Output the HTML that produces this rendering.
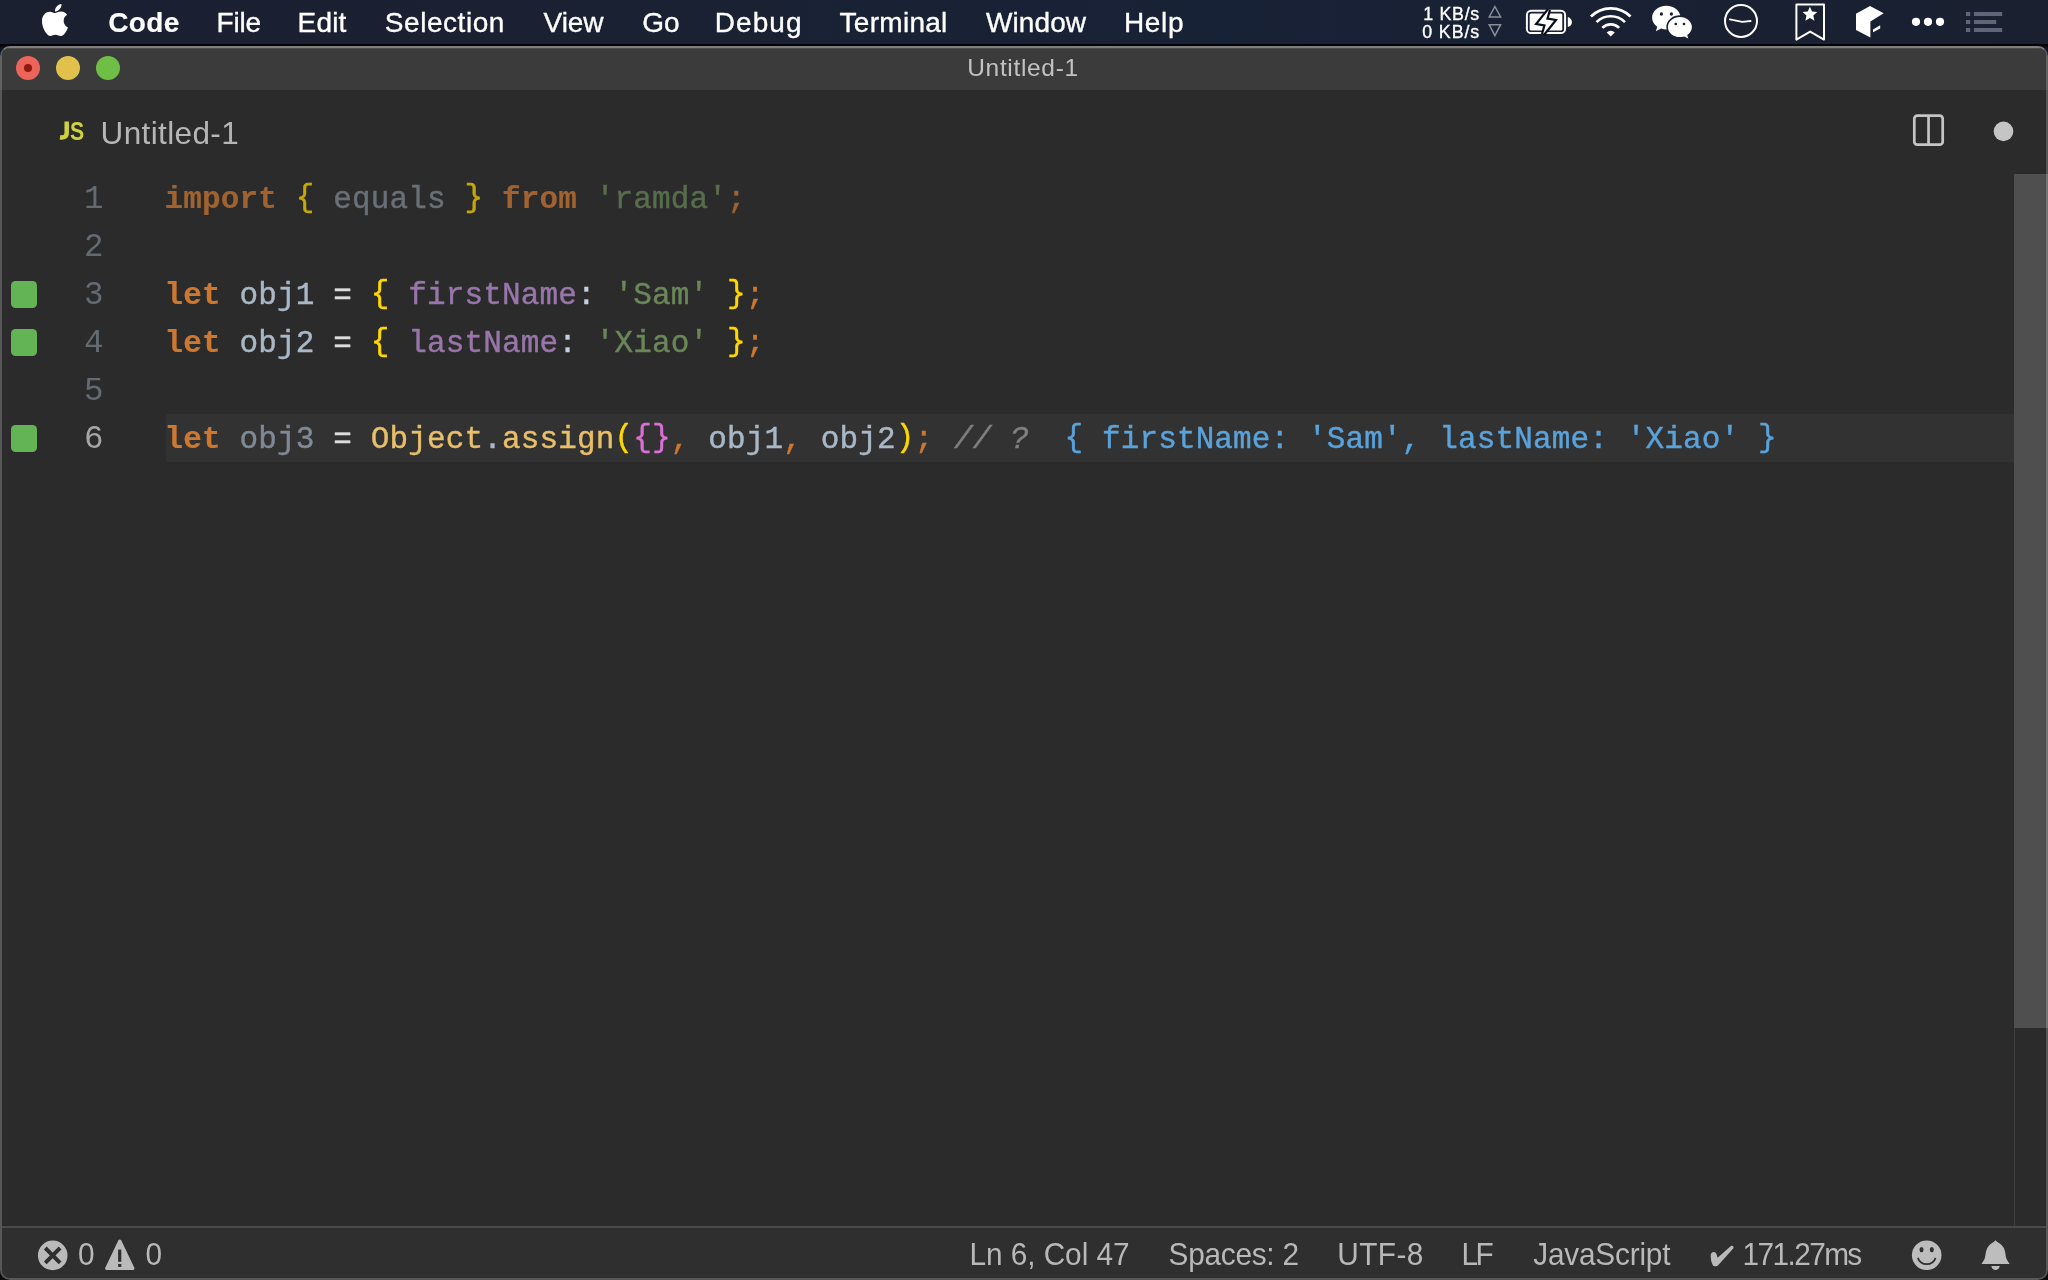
<!DOCTYPE html>
<html>
<head>
<meta charset="utf-8">
<title>Untitled-1</title>
<style>
*{margin:0;padding:0;box-sizing:border-box}
html,body{width:2048px;height:1280px;overflow:hidden;background:#0d0d0d}
body{position:relative;font-family:"Liberation Sans",sans-serif;color:#fff}
.abs{position:absolute}
/* ---------- macOS menu bar ---------- */
#menubar{will-change:transform;position:absolute;left:0;top:0;width:2048px;height:45px;background:linear-gradient(90deg,#1b2031 0,#1a2133 30%,#182236 60%,#192134 75%,#1a2030 100%)}
#menubar .mi{position:absolute;top:0;height:44px;line-height:45px;font-size:28px;color:#fff;white-space:nowrap;transform-origin:0 50%;-webkit-text-stroke:0.35px #fff}
#menubar .mi.b{font-weight:bold;-webkit-text-stroke:0.15px #fff}
#menuline{position:absolute;left:0;top:44px;width:2048px;height:16px;background:linear-gradient(#020305 0,#020305 2px,#0d1626 3px,#0d1626 100%)}
.bov{position:absolute;width:2px}
/* ---------- window ---------- */
#win{will-change:transform;position:absolute;left:0;top:46px;width:2048px;height:1234px;background:#2b2b2b;border-radius:10px;overflow:hidden;border:2px solid #575757;border-top-color:#7e7e7e}
#titlebar{position:absolute;left:0;top:0;width:2044px;height:42px;background:#3b3b3b;box-shadow:inset 0 1px 0 #4c4c4c}
#title{position:absolute;left:0;width:2042px;top:0;height:42px;line-height:40px;text-align:center;font-size:24.5px;letter-spacing:0.67px;color:#c2c2c2}
.tl{position:absolute;width:24px;height:24px;border-radius:50%;top:8px}
/* ---------- tab bar ---------- */
#tabs{position:absolute;left:0;top:42px;width:2044px;height:84px;background:#2b2b2b}
#tabname{position:absolute;left:98.5px;top:1px;height:84px;line-height:84px;font-size:31.5px;letter-spacing:0.38px;color:#b6b6b6;white-space:nowrap}
#jsicon{position:absolute;left:67.8px;top:24.2px;height:34px;line-height:34px;font-size:25.6px;font-weight:bold;color:#cfd13e;transform:scaleX(0.83);transform-origin:0 50%;white-space:nowrap}
/* ---------- editor ---------- */
#editor{position:absolute;left:0;top:126px;width:2044px;height:1052px;background:#2b2b2b}
.ln{position:absolute;left:0;width:2012px;height:48px;line-height:48px;font-family:"Liberation Mono",monospace;font-size:31px;white-space:pre}
.ln .num{position:absolute;left:49.3px;width:52.2px;top:1.8px;text-align:right;color:#636a71;font-size:32.5px;letter-spacing:0}
.ln .code{position:absolute;left:162.6px;top:2.2px;color:#a9b7c6;letter-spacing:0.14px;-webkit-text-stroke:0.42px}
.ln.cur .hl{position:absolute;left:164px;top:0;width:1848px;height:48px;background:#323232}
.ln.cur .num{color:#a6a6a6}
.sq{position:absolute;left:8.6px;top:10.5px;width:26.8px;height:27px;border-radius:4.5px;background:#62b455}
.o{color:#dddddd}
.cl{color:#c4d0dc}
.k{color:#cc7832;font-weight:bold;-webkit-text-stroke:0.2px #cc7832}
.p{color:#cc7832}
.y{color:#ffd700;position:relative;top:-2.6px}
.qb{position:relative;top:-2.6px}
.m{color:#da70d6;position:relative;top:-2.6px}
.s{color:#6a8759}
.pr{color:#9876aa}
.f{color:#e8bf6a}
.g{color:#808a94}
.c{color:#808080;font-style:italic;position:relative;left:2px}
.q{color:#5aa2da}
#sbar{position:absolute;left:2012px;top:0;width:32px;height:854px;background:#4f4f4f}
#sline{position:absolute;left:2012px;top:0;width:1px;height:1054px;background:#3e3e3e}
/* ---------- status bar ---------- */
#status{position:absolute;left:0;top:1178px;width:2044px;height:52px;background:#2f2f2f;border-top:2px solid #4a4a4a}
#status .st{position:absolute;top:3.4px;height:48px;line-height:48px;font-size:29.8px;transform:scaleY(1.05);transform-origin:0 56%;color:#b8b8b8;white-space:nowrap}
</style>
</head>
<body>
<div id="menubar">
  <div class="mi b" style="left:108.3px;letter-spacing:0.35px">Code</div>
  <div class="mi" style="left:216.5px;letter-spacing:-0.2px">File</div>
  <div class="mi" style="left:297.6px;letter-spacing:0.15px">Edit</div>
  <div class="mi" style="left:384.8px;letter-spacing:0.55px">Selection</div>
  <div class="mi" style="left:543.6px;letter-spacing:-0.1px">View</div>
  <div class="mi" style="left:642.3px">Go</div>
  <div class="mi" style="left:714.8px;letter-spacing:1.05px">Debug</div>
  <div class="mi" style="left:839.6px;letter-spacing:0.27px">Terminal</div>
  <div class="mi" style="left:986px;letter-spacing:0.1px">Window</div>
  <div class="mi" style="left:1124px;letter-spacing:0.65px">Help</div>
  <svg class="abs" style="left:0;top:0" width="2048" height="45" viewBox="0 0 2048 45">
    <!-- apple -->
    <g transform="translate(41.7,1.6) scale(0.0690,0.0715)" fill="#fff">
      <path d="M318.7 268.7c-.2-36.7 16.4-64.4 50-84.800-18.800-26.900-47.200-41.700-84.700-44.600-35.500-2.800-74.300 20.700-88.500 20.700-15 0-49.400-19.700-76.400-19.700C63.300 141.200 4 184.800 4 273.500q0 39.300 14.400 81.200c12.800 36.700 59 126.700 107.200 125.200 25.200-.6 43-17.900 75.800-17.900 31.800 0 48.300 17.900 76.400 17.900 48.600-.7 90.400-82.500 102.600-119.300-65.200-30.700-61.700-90-61.700-91.900zm-56.600-164.200c27.300-32.400 24.800-61.900 24-72.500-24.100 1.400-52 16.400-67.900 34.900-17.500 19.800-27.800 44.300-25.600 71.900 26.100 2 49.900-11.400 69.500-34.300z"/>
    </g>
    <!-- net speed -->
    <g font-family="Liberation Sans, sans-serif" font-size="17.8" fill="#fff" stroke="#fff" stroke-width="0.35">
      <text x="1423.2" y="19.8" textLength="56" lengthAdjust="spacing">1 KB/s</text>
      <text x="1422.2" y="38.1" textLength="57" lengthAdjust="spacing">0 KB/s</text>
    </g>
    <path d="M1494.900 6.500 L1500.600 17 L1489.200 17 Z" fill="none" stroke="#8b8e98" stroke-width="1.500" stroke-linejoin="miter"/>
    <path d="M1494.900 35.700 L1500.600 24.700 L1489.200 24.700 Z" fill="none" stroke="#8b8e98" stroke-width="1.500" stroke-linejoin="miter"/>
    <!-- battery -->
    <rect x="1526.900" y="10.700" width="38.200" height="22.400" rx="4.200" ry="4.200" fill="none" stroke="#fff" stroke-width="2"/>
    <rect x="1529.700" y="13.500" width="32.600" height="16.900" rx="1.500" fill="#fff"/>
    <path d="M1567.800 17 C1573.300 18.200 1573.300 25.900 1567.800 27.100 Z" fill="#fff"/>
    <path d="M1548.900 9.800 L1546.100 19.400 L1554 20.700 L1543.100 34.300 L1545.800 24.600 L1538.100 23.300 Z" fill="#fff" stroke="#0a0f1c" stroke-width="4.400" paint-order="stroke" stroke-linejoin="miter"/>
    <!-- wifi -->
    <g fill="none" stroke="#fff" stroke-width="2.700">
      <path d="M1590.950 16.500 A28 28 0 0 1 1630.550 16.500"/>
      <path d="M1596.550 22.100 A20.100 20.100 0 0 1 1624.950 22.100"/>
      <path d="M1602.350 27.900 A11.900 11.900 0 0 1 1619.150 27.900"/>
    </g>
    <path d="M1610.750 36.500 L1606.700 32.450 A5.700 5.700 0 0 1 1614.800 32.450 Z" fill="#fff"/>
    <!-- wechat -->
    <path d="M1666.300 5.800 C1658.400 5.800 1652.100 11.100 1652.100 17.700 C1652.100 21.400 1654.100 24.600 1657.300 26.800 L1655.800 31.200 L1661.200 28.500 C1662.800 29.100 1664.500 29.500 1666.300 29.500 C1674.200 29.500 1680.500 24.200 1680.500 17.700 C1680.500 11.100 1674.200 5.800 1666.300 5.800 Z" fill="#fff"/>
    <circle cx="1661.400" cy="14" r="1.650" fill="#1b2131"/><circle cx="1671.400" cy="14" r="1.650" fill="#1b2131"/>
    <path d="M1679.900 16.900 C1673.300 16.900 1667.900 21.400 1667.900 27 C1667.900 32.600 1673.300 37.100 1679.900 37.100 C1681.400 37.100 1682.800 36.900 1684.100 36.500 L1688.300 38.600 L1687.200 35 C1690 33.200 1691.900 30.300 1691.900 27 C1691.900 21.400 1686.500 16.900 1679.900 16.900 Z" fill="#fff" stroke="#1b2131" stroke-width="3.100" paint-order="stroke"/>
    <circle cx="1675.800" cy="24" r="1.350" fill="#1b2131"/><circle cx="1684" cy="24" r="1.350" fill="#1b2131"/>
    <!-- clock -->
    <circle cx="1741" cy="21" r="16" fill="none" stroke="#fff" stroke-width="2"/>
    <path d="M1729.800 19.400 L1742.300 21.900 L1750.600 21" fill="none" stroke="#fff" stroke-width="1.900" stroke-linecap="round" stroke-linejoin="round"/>
    <!-- bookmark -->
    <path d="M1796.400 4.400 L1824 4.400 L1824 39.600 L1810.200 31.600 L1796.400 39.600 Z" fill="none" stroke="#fff" stroke-width="2" stroke-linejoin="round"/>
    <path d="M1809.90 6.70 L1812.02 11.49 L1817.22 12.02 L1813.32 15.51 L1814.43 20.63 L1809.90 18.00 L1805.37 20.63 L1806.48 15.51 L1802.58 12.02 L1807.78 11.49 Z" fill="#fff"/>
    <!-- box -->
    <path d="M1870 5.900 L1883.700 13.200 L1870.400 21.600 L1870.400 37.600 L1856 30 L1856 13.700 Z" fill="#fff"/>
    <path d="M1873 29.500 L1880.200 25.300 L1880.200 28.600 L1873 32.300 Z" fill="#fff"/>
    <!-- dots -->
    <circle cx="1916" cy="21.800" r="4.100" fill="#fff"/><circle cx="1928" cy="21.800" r="4.100" fill="#fff"/><circle cx="1940" cy="21.800" r="4.100" fill="#fff"/>
    <!-- list -->
    <g fill="#60657a">
      <rect x="1966" y="12" width="4.200" height="4"/><rect x="1973.900" y="12" width="28.300" height="4"/>
      <rect x="1966" y="20" width="4.200" height="4"/><rect x="1973.900" y="20" width="22.300" height="4"/>
      <rect x="1966" y="28" width="4.200" height="4"/><rect x="1973.900" y="28" width="28.300" height="4"/>
    </g>
  </svg>
</div>
<div id="menuline"></div>

<div id="win">
  <div id="titlebar">
    <div class="tl" style="left:14px;background:#ed655a"><div style="position:absolute;left:8px;top:8px;width:8px;height:8px;border-radius:50%;background:#8e1a10"></div></div>
    <div class="tl" style="left:54px;background:#e1c04c"></div>
    <div class="tl" style="left:94px;background:#6fbf47"></div>
    <div id="title">Untitled-1</div>
  </div>
  <div id="tabs">
    <svg class="abs" style="left:50px;top:20px" width="40" height="40" viewBox="52 110 40 40"><path d="M66.7 121.6 L66.7 132.8 C66.7 136.6 64.4 137.9 60 137.2" fill="none" stroke="#cfd13e" stroke-width="4.5"/></svg>
    <div id="jsicon">S</div>
    <div id="tabname">Untitled-1</div>
    <svg class="abs" style="left:1900px;top:14px" width="140" height="60" viewBox="1902 104 140 60">
      <rect x="1914.300" y="115.700" width="28.400" height="29" rx="3" fill="none" stroke="#c5c5c5" stroke-width="2.700"/>
      <rect x="1927.200" y="115.700" width="2.700" height="29" fill="#c5c5c5"/>
      <circle cx="2003.500" cy="131.400" r="9.800" fill="#c5c5c5"/>
    </svg>
  </div>
  <div id="editor">
    <div class="ln" style="top:0"><span class="num">1</span><span class="code" style="opacity:0.72"><span class="k">import</span> <span class="y">{</span> <span class="g">equals</span> <span class="y">}</span> <span class="k">from</span> <span class="s">'ramda'</span><span class="p">;</span></span></div>
    <div class="ln" style="top:48px"><span class="num">2</span></div>
    <div class="ln" style="top:96px"><div class="sq"></div><span class="num">3</span><span class="code"><span class="k">let</span> obj1 <span class="o">=</span> <span class="y">{</span> <span class="pr">firstName</span><span class="cl">:</span> <span class="s">'Sam'</span> <span class="y">}</span><span class="p">;</span></span></div>
    <div class="ln" style="top:144px"><div class="sq"></div><span class="num">4</span><span class="code"><span class="k">let</span> obj2 <span class="o">=</span> <span class="y">{</span> <span class="pr">lastName</span><span class="cl">:</span> <span class="s">'Xiao'</span> <span class="y">}</span><span class="p">;</span></span></div>
    <div class="ln" style="top:192px"><span class="num">5</span></div>
    <div class="ln cur" style="top:240px"><div class="hl"></div><div class="sq"></div><span class="num">6</span><span class="code"><span class="k">let</span> <span class="g">obj3</span> <span class="o">=</span> <span class="f">Object</span>.<span class="f">assign</span><span class="y">(</span><span class="m">{}</span><span class="p">,</span> obj1<span class="p">,</span> obj2<span class="y">)</span><span class="p">;</span> <span class="c">// ?</span>  <span class="q"><span class="qb">{</span> firstName: 'Sam', lastName: 'Xiao' <span class="qb">}</span></span></span></div>
    <div id="sline"></div>
    <div id="sbar"></div>
  </div>
  <div id="status">
    <svg class="abs" style="left:0;top:0" width="2044" height="50" viewBox="2 1228 2044 50">
      <circle cx="52.700" cy="1255.400" r="14.800" fill="#bababa"/>
      <path d="M45.300 1248 L60.100 1262.800 M60.100 1248 L45.300 1262.800" stroke="#2f2f2f" stroke-width="3.900" fill="none"/>
      <path d="M119.800 1241.200 L132.800 1268.400 L106.800 1268.400 Z" fill="#bababa" stroke="#bababa" stroke-width="3.400" stroke-linejoin="round"/>
      <rect x="118.100" y="1249.600" width="3.200" height="12.200" fill="#2f2f2f"/>
      <rect x="118.100" y="1264" width="3.200" height="2.900" fill="#2f2f2f"/>
      <path d="M1713.75 1251.9 C1715.3 1251.9 1716.3 1252.8 1716.6 1254.5 L1717.6 1257.7 L1730.6 1246.3 C1732.3 1244.9 1734.4 1246.8 1733.2 1248.5 L1718.6 1264.8 C1717 1266.8 1713.6 1266.8 1712.6 1264.8 C1711.2 1262 1710.7 1258.5 1710.7 1255.5 C1710.7 1253.3 1712 1251.9 1713.75 1251.9 Z" fill="#bababa"/>
      <circle cx="1926.700" cy="1255.200" r="14.800" fill="#bdbdbd"/>
      <ellipse cx="1921.500" cy="1249.600" rx="2" ry="2.700" fill="#2f2f2f"/>
      <ellipse cx="1931.800" cy="1249.600" rx="2" ry="2.700" fill="#2f2f2f"/>
      <path d="M1917.800 1257.900 C1920.800 1266.300 1932.600 1266.300 1935.600 1257.900" fill="none" stroke="#2f2f2f" stroke-width="1.700"/>
      <path d="M1995.5 1240.2 C1997.2 1242.2 2000.6 1243.3 2003 1246.8 C2005.9 1251 2005.2 1256 2006.7 1259.3 C2007.6 1261.3 2008.7 1262.500 2009.600 1264 L1981.500 1264 C1982.4 1262.500 1983.500 1261.300 1984.400 1259.300 C1985.900 1256 1985.200 1251 1988.100 1246.800 C1990.500 1243.300 1993.800 1242.200 1995.500 1240.200 Z" fill="#bdbdbd"/>
      <path d="M1991.400 1266 L1999.700 1266 C1999.200 1271.300 1991.900 1271.300 1991.400 1266 Z" fill="#bdbdbd"/>
    </svg>
    <div class="st" style="left:76px">0</div>
    <div class="st" style="left:143.6px">0</div>
    <div class="st" style="left:967.4px;letter-spacing:-0.05px">Ln 6, Col 47</div>
    <div class="st" style="left:1166.6px;letter-spacing:-0.27px">Spaces: 2</div>
    <div class="st" style="left:1335.2px;letter-spacing:0.45px">UTF-8</div>
    <div class="st" style="left:1459.5px;letter-spacing:-2.6px">LF</div>
    <div class="st" style="left:1531.3px;letter-spacing:-0.22px">JavaScript</div>
    <div class="st" style="left:1740.6px;letter-spacing:-1.6px">171.27ms</div>
  </div>
</div>
<div class="bov" style="left:2046px;top:174px;height:854px;background:#747474"></div>
<div class="bov" style="left:0;top:56px;height:34px;background:#626262"></div>
<div class="bov" style="left:2046px;top:56px;height:34px;background:#626262"></div>
</body>
</html>
